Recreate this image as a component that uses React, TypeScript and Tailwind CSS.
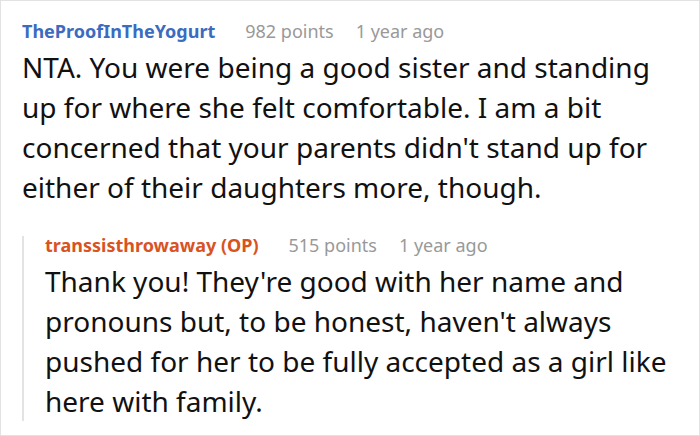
export default function App() {
  return (
    <div className="w-[700px] h-[436px] bg-white border border-[#e2e2e2] overflow-hidden" style={{ fontFamily: '"Noto Sans", sans-serif' }}>
      <div className="pl-[21px] pr-[18px] pt-[14px]">
        <div className="flex items-baseline text-[18px] leading-[32px]">
          <span className="font-bold text-[#3b6cbf]">TheProofInTheYogurt</span>
          <span className="ml-[30px] text-[#999999]">982 points</span>
          <span className="ml-[22px] text-[#999999]">1 year ago</span>
        </div>
        <p className="text-[28px] leading-[40px] text-[#111111]">
          NTA. You were being a good sister and standing up for where she felt comfortable. I am a bit concerned that your parents didn't stand up for either of their daughters more, though.
        </p>
      </div>
      <div className="ml-[21px] mr-[14px] mt-[29px] border-l-2 border-[#e3e3e3] pl-[21px]">
        <div className="flex items-baseline text-[18px] leading-[18px]">
          <span className="font-bold text-[#d9531f]">transsisthrowaway (OP)</span>
          <span className="ml-[30px] text-[#999999]">515 points</span>
          <span className="ml-[22px] text-[#999999]">1 year ago</span>
        </div>
        <p className="text-[28px] leading-[40px] text-[#111111] mt-[7px] mb-[-4px]">
          Thank you! They're good with her name and pronouns but, to be honest, haven't always pushed for her to be fully accepted as a girl like here with family.
        </p>
      </div>
    </div>
  );
}
